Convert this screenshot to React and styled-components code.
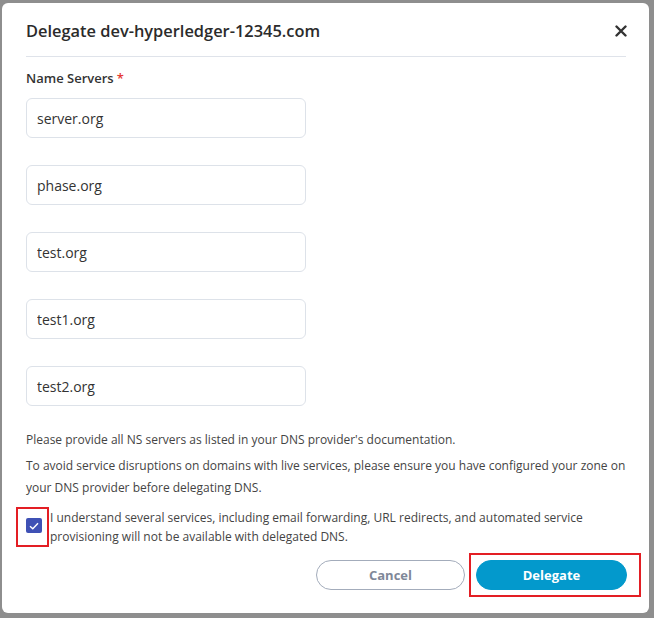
import React from 'react';
import styled, { createGlobalStyle } from 'styled-components';

const GlobalStyle = createGlobalStyle`
  html, body {
    margin: 0;
    padding: 0;
    background: #8e8e8e;
  }
  * {
    box-sizing: border-box;
  }
`;

const Backdrop = styled.div`
  width: 654px;
  height: 618px;
  padding: 3px 5px 5px 2px;
  font-family: "Open Sans", "Noto Sans", sans-serif;
`;

const ModalBox = styled.div`
  width: 647px;
  height: 610px;
  background: #ffffff;
  border-radius: 6px;
  padding: 0 23px 0 24px;
  display: flex;
  flex-direction: column;
`;

const Header = styled.div`
  height: 54px;
  padding-top: 2px;
  display: flex;
  align-items: center;
  justify-content: space-between;
  border-bottom: 1px solid #dfe3ea;
`;

const Title = styled.h2`
  margin: 0;
  font-size: 16.4px;
  font-weight: 600;
  color: #2b2b2b;
`;

const CloseButton = styled.button`
  background: transparent;
  border: none;
  padding: 0;
  margin-right: -2px;
  width: 14px;
  height: 14px;
  display: flex;
  align-items: center;
  justify-content: center;
  cursor: pointer;
`;

const Label = styled.div`
  margin-top: 12px;
  font-size: 13px;
  line-height: 18px;
  font-weight: 600;
  color: #333333;
`;

const Required = styled.span`
  color: #e53935;
  margin-left: 3px;
`;

const ServerList = styled.div`
  margin-top: 11px;
  display: flex;
  flex-direction: column;
  gap: 27px;
`;

const ServerInput = styled.input`
  width: 280px;
  height: 40px;
  border: 1px solid #dde2e9;
  border-radius: 6px;
  padding: 0 10px;
  font-family: inherit;
  font-size: 14px;
  color: #333333;
  outline: none;
`;

const Note = styled.p`
  margin: ${p => p.$top}px 0 0;
  font-size: 12px;
  line-height: 22px;
  color: #444444;
`;

const ConfirmRow = styled.div`
  margin-top: 8px;
  margin-left: -10px;
  display: flex;
  align-items: center;
`;

const Highlight = styled.div`
  border: 2px solid #e31e24;
  display: flex;
  align-items: center;
  padding: ${p => p.$pad};
`;

const CheckBox = styled.span`
  width: 16px;
  height: 15px;
  border-radius: 2px;
  background: #3f51b5;
  display: flex;
  align-items: center;
  justify-content: center;
`;

const ConfirmText = styled.span`
  font-size: 12px;
  line-height: 19px;
  color: #444444;
  padding-left: 1px;
`;

const Footer = styled.div`
  margin-top: 6px;
  margin-right: -15px;
  display: flex;
  justify-content: flex-end;
  align-items: center;
  gap: 4px;
`;

const PillButton = styled.button`
  width: ${p => p.$w}px;
  height: 30px;
  border-radius: 15px;
  font-family: inherit;
  font-size: 13px;
  font-weight: 700;
  cursor: pointer;
  border: 1px solid ${p => (p.$primary ? '#0399cc' : '#a3acbb')};
  background: ${p => (p.$primary ? '#0399cc' : '#ffffff')};
  color: ${p => (p.$primary ? '#ffffff' : '#7f8898')};
`;

const servers = ['server.org', 'phase.org', 'test.org', 'test1.org', 'test2.org'];

export default function App() {
  return (
    <Backdrop>
      <GlobalStyle />
      <ModalBox>
        <Header>
          <Title>Delegate dev-hyperledger-12345.com</Title>
          <CloseButton type="button" aria-label="Close">
            <svg width="12" height="12" viewBox="0 0 12 12">
              <path d="M1.5 1.5 L10.5 10.5 M10.5 1.5 L1.5 10.5" stroke="#333" strokeWidth="2.4" strokeLinecap="round" />
            </svg>
          </CloseButton>
        </Header>
        <Label>
          Name Servers<Required>*</Required>
        </Label>
        <ServerList>
          {servers.map(s => (
            <ServerInput key={s} defaultValue={s} />
          ))}
        </ServerList>
        <Note $top={23}>Please provide all NS servers as listed in your DNS provider's documentation.</Note>
        <Note $top={4}>
          To avoid service disruptions on domains with live services, please ensure you have configured your zone on your DNS provider before delegating DNS.
        </Note>
        <ConfirmRow>
          <Highlight $pad="9px 5px 12px 8px">
            <CheckBox>
              <svg width="10" height="8" viewBox="0 0 10 8">
                <path d="M1 4.2 L3.8 6.8 L9 1.2" stroke="#fff" strokeWidth="1.4" fill="none" />
              </svg>
            </CheckBox>
          </Highlight>
          <ConfirmText>
            I understand several services, including email forwarding, URL redirects, and automated service provisioning will not be available with delegated DNS.
          </ConfirmText>
        </ConfirmRow>
        <Footer>
          <PillButton type="button" $w={149}>Cancel</PillButton>
          <Highlight $pad="5px 12px 5px 5px">
            <PillButton type="button" $w={151} $primary>Delegate</PillButton>
          </Highlight>
        </Footer>
      </ModalBox>
    </Backdrop>
  );
}
